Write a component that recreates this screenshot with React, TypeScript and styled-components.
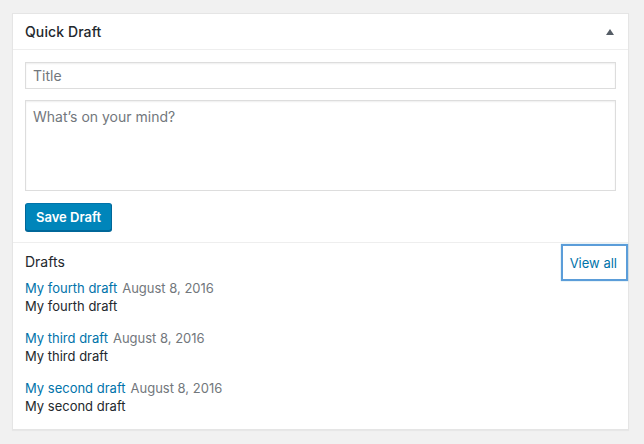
import React from "react";
import styled, { createGlobalStyle } from "styled-components";

const Global = createGlobalStyle`
  html, body { margin: 0; padding: 0; background: #f1f1f1; }
  body { font-family: Inter, "Noto Sans", sans-serif; color: #23282d; }
  * { box-sizing: border-box; }
`;

const Page = styled.div`
  padding: 13px 0 0 12px;
  width: 644px;
  height: 444px;
`;

const Panel = styled.section`
  width: 617px;
  background: #fff;
  border: 1px solid #e5e5e5;
  box-shadow: 0 1px 1px rgba(0, 0, 0, 0.04);
`;

const Header = styled.div`
  display: flex;
  align-items: center;
  justify-content: space-between;
  padding: 8px 12px;
  border-bottom: 1px solid #eee;
`;

const Title = styled.h2`
  margin: 0;
  font-size: 14px;
  line-height: 19px;
  font-weight: 500;
  letter-spacing: 0.1px;
  color: #23282d;
`;

const Toggle = styled.svg`
  width: 8px;
  height: 6px;
  margin-right: 2px;
  margin-top: 1px;
`;

const Form = styled.form`
  display: flex;
  flex-direction: column;
  align-items: flex-start;
  padding: 12px 12px 11px;
`;

const TextInput = styled.input`
  width: 100%;
  height: 27px;
  margin: 0 0 11px;
  padding: 0 7px;
  border: 1px solid #ddd;
  box-shadow: inset 0 1px 2px rgba(0, 0, 0, 0.07);
  font-family: inherit;
  font-size: 14px;
  color: #32373c;
  outline: none;
  &::placeholder { color: #72777c; }
`;

const TextArea = styled.textarea`
  width: 100%;
  height: 91px;
  margin: 0 0 12px;
  padding: 6px 7px;
  border: 1px solid #ddd;
  box-shadow: inset 0 1px 2px rgba(0, 0, 0, 0.07);
  font-family: inherit;
  font-size: 14px;
  line-height: 20px;
  color: #32373c;
  resize: none;
  outline: none;
  &::placeholder { color: #72777c; }
`;

const Button = styled.button`
  height: 28px;
  padding: 0 10px;
  border: 1px solid #0073aa;
  border-color: #0073aa #006799 #006799;
  border-radius: 3px;
  background: #0085ba;
  box-shadow: 0 1px 0 #006799;
  color: #fff;
  font-family: inherit;
  font-size: 13px;
  font-weight: 600;
  line-height: 26px;
  cursor: pointer;
`;

const Drafts = styled.div`
  border-top: 1px solid #eee;
  padding: 0 0 14px 12px;
`;

const DraftsHead = styled.div`
  display: flex;
  justify-content: space-between;
  align-items: flex-start;
  height: 36px;
`;

const DraftsTitle = styled.h3`
  margin: 0;
  padding-top: 9px;
  font-size: 14px;
  line-height: 20px;
  font-weight: 400;
  color: #23282d;
`;

const ViewAll = styled.a`
  display: flex;
  align-items: center;
  height: 37px;
  margin-top: 1px;
  padding: 0 9px 0 7px;
  border: 2px solid #5b9dd9;
  font-size: 13px;
  color: #0073aa;
  text-decoration: none;
  box-shadow: 0 0 1px rgba(30, 140, 190, 0.6);
`;

const List = styled.ul`
  list-style: none;
  margin: 0;
  padding: 0;
  display: flex;
  flex-direction: column;
  gap: 14px;
`;

const Item = styled.li`
  font-size: 13px;
  line-height: 18px;
`;

const DraftLine = styled.div`
  display: flex;
  gap: 5px;
`;

const DraftLink = styled.a`
  color: #0073aa;
  text-decoration: none;
`;

const DraftDate = styled.time`
  color: #72777c;
`;

const Excerpt = styled.p`
  margin: 0;
  color: #23282d;
`;

const drafts = [
  { title: "My fourth draft", excerpt: "My fourth draft" },
  { title: "My third draft", excerpt: "My third draft" },
  { title: "My second draft", excerpt: "My second draft" },
];

export default function App() {
  return (
    <Page>
      <Global />
      <Panel>
        <Header>
          <Title>Quick Draft</Title>
          <Toggle viewBox="0 0 8 6">
            <polygon points="4,0 8,6 0,6" fill="#555d66" />
          </Toggle>
        </Header>
        <Form onSubmit={(e) => e.preventDefault()}>
          <TextInput placeholder="Title" />
          <TextArea placeholder="What’s on your mind?" />
          <Button type="submit">Save Draft</Button>
        </Form>
        <Drafts>
          <DraftsHead>
            <DraftsTitle>Drafts</DraftsTitle>
            <ViewAll href="#">View all</ViewAll>
          </DraftsHead>
          <List>
            {drafts.map((d) => (
              <Item key={d.title}>
                <DraftLine>
                  <DraftLink href="#">{d.title}</DraftLink>
                  <DraftDate>August 8, 2016</DraftDate>
                </DraftLine>
                <Excerpt>{d.excerpt}</Excerpt>
              </Item>
            ))}
          </List>
        </Drafts>
      </Panel>
    </Page>
  );
}
